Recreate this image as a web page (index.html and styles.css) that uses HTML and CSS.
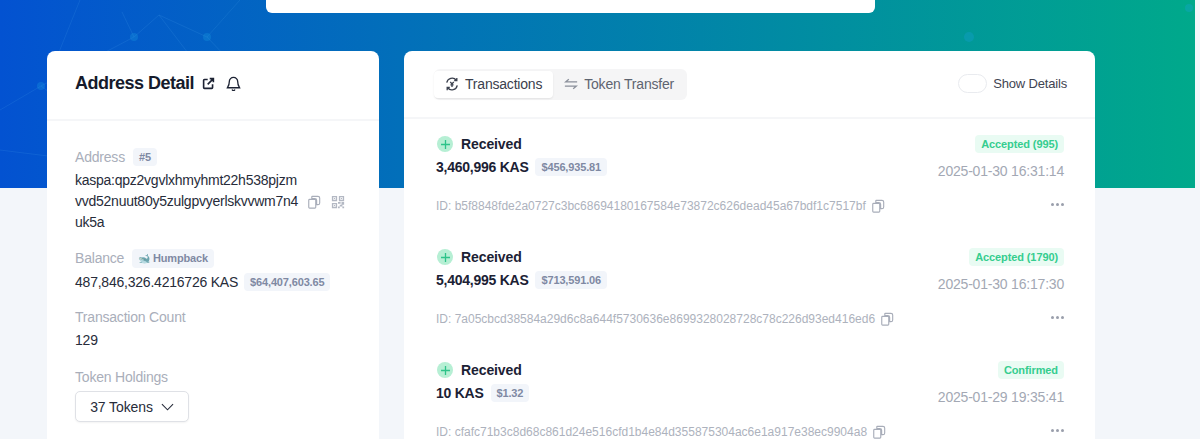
FILE: index.html
```html
<!DOCTYPE html>
<html lang="en">
<head>
<meta charset="utf-8">
<title>Address Detail</title>
<link rel="stylesheet" href="styles.css">
</head>
<body>
<div class="page">
  <div class="hero">
    <svg class="hero-net" viewBox="0 0 1195 188" preserveAspectRatio="none" aria-hidden="true">
      <g class="net-lines">
        <path d="M57 57 80 0M134 37 122 12M134 37 159 15 207 37 226 57M159 15 191 57M134 37 96 57M41 86 96 57M41 86 0 110M41 86 100 130M0 150 120 165 300 120M207 37 240 0"/>
      </g>
      <g class="net-dots">
        <circle cx="134" cy="37" r="4"/><circle cx="207" cy="37" r="4"/><circle cx="41" cy="86" r="4"/>
        <circle cx="969" cy="37" r="5"/><circle cx="1189" cy="8" r="4"/>
      </g>
    </svg>
    <div class="search-box"></div>
  </div>
  <main class="content">
    <aside class="card side">
      <header class="side-head">
        <h1>Address Detail</h1>
        <svg class="ico-share" viewBox="0 0 16 16"><path d="M7 3H3a1 1 0 0 0-1 1v9a1 1 0 0 0 1 1h9a1 1 0 0 0 1-1V9M9.500 2H14v4.500M14 2 7 9"/></svg>
        <svg class="ico-bell" viewBox="0 0 16 16"><path d="M8 1.500a4.500 4.500 0 0 0-4.500 4.500c0 4-1.500 5.500-2 6.500h13c-.5-1-2-2.500-2-6.500A4.500 4.500 0 0 0 8 1.500ZM6.500 14.500a1.600 1.600 0 0 0 3 0"/></svg>
      </header>
      <div class="side-body">
        <div class="field">
          <div class="label">Address <span class="chip chip-rank">#5</span></div>
          <div class="addr">
            <div>kaspa:qpz2vgvlxhmyhmt22h538pjzm</div>
            <div class="addr-line">vvd52nuut80y5zulgpvyerlskvvwm7n4
              <svg class="ico-copy" viewBox="0 0 16 16"><use href="#copy"/></svg>
              <svg class="ico-qr" viewBox="0 0 16 16"><path d="M1 1h6v6H1zM2.500 2.500v3h3v-3zM9 1h6v6H9zM10.500 2.500v3h3v-3zM1 9h6v6H1zM2.500 10.500v3h3v-3zM3.300 3.300h1.400v1.400H3.300zM11.300 3.300h1.400v1.400h-1.400zM3.300 11.300h1.400v1.400H3.300zM8 8h3v2H8zM12 8h3v3h-3zM10 11h3v2h-3zM8 13h2v2H8zM13 13h2v2h-2z" fill-rule="evenodd"/></svg>
            </div>
            <div>uk5a</div>
          </div>
        </div>
        <div class="field field-balance">
          <div class="label">Balance <span class="chip chip-whale"><span class="whale">🐋</span> Humpback</span></div>
          <div class="value">487,846,326.4216726 KAS <span class="chip chip-usd">$64,407,603.65</span></div>
        </div>
        <div class="field field-count">
          <div class="label">Transaction Count</div>
          <div class="value">129</div>
        </div>
        <div class="field field-tokens">
          <div class="label">Token Holdings</div>
          <button class="tokens-btn" type="button">37 Tokens
            <svg viewBox="0 0 14 8"><path d="M1 1l6 6 6-6"/></svg>
          </button>
        </div>
      </div>
    </aside>
    <section class="card list">
      <header class="list-head">
        <div class="tabs">
          <div class="tab tab-on">
            <svg class="tab-ico" viewBox="0 0 16 16"><path d="M2 6.500A6.300 6.300 0 0 1 13 3.500M14 9.500A6.300 6.300 0 0 1 3 12.500M13.500 1v3h-3M2.500 15v-3h3M6 5.500 8 8l2-2.500M8 8v3.500M6.200 9h3.600"/></svg>
            Transactions
          </div>
          <div class="tab">
            <svg class="tab-ico tab-ico-muted" viewBox="0 0 16 16"><path d="M15 5.500H2L5.500 2.500M1 10.500h13L10.500 13.500"/></svg>
            Token Transfer
          </div>
        </div>
        <div class="details"><span class="switch"></span>Show Details</div>
      </header>
      <article class="tx">
        <div class="tx-top">
          <div>
            <div class="tx-type"><span class="plus"><svg viewBox="0 0 16 16"><path d="M8 2.500v11M2.500 8h11"/></svg></span>Received</div>
            <div class="tx-amt">3,460,996 KAS <span class="chip chip-usd">$456,935.81</span></div>
          </div>
          <div class="tx-side">
            <span class="status">Accepted (995)</span>
            <div class="time">2025-01-30 16:31:14</div>
          </div>
        </div>
        <div class="tx-foot">
          <div class="tx-id">ID: b5f8848fde2a0727c3bc68694180167584e73872c626dead45a67bdf1c7517bf <svg class="ico-copy" viewBox="0 0 16 16"><use href="#copy"/></svg></div>
          <span class="more"><i></i><i></i><i></i></span>
        </div>
      </article>
      <article class="tx">
        <div class="tx-top">
          <div>
            <div class="tx-type"><span class="plus"><svg viewBox="0 0 16 16"><path d="M8 2.500v11M2.500 8h11"/></svg></span>Received</div>
            <div class="tx-amt">5,404,995 KAS <span class="chip chip-usd">$713,591.06</span></div>
          </div>
          <div class="tx-side">
            <span class="status">Accepted (1790)</span>
            <div class="time">2025-01-30 16:17:30</div>
          </div>
        </div>
        <div class="tx-foot">
          <div class="tx-id">ID: 7a05cbcd38584a29d6c8a644f5730636e8699328028728c78c226d93ed416ed6 <svg class="ico-copy" viewBox="0 0 16 16"><use href="#copy"/></svg></div>
          <span class="more"><i></i><i></i><i></i></span>
        </div>
      </article>
      <article class="tx">
        <div class="tx-top">
          <div>
            <div class="tx-type"><span class="plus"><svg viewBox="0 0 16 16"><path d="M8 2.500v11M2.500 8h11"/></svg></span>Received</div>
            <div class="tx-amt">10 KAS <span class="chip chip-usd">$1.32</span></div>
          </div>
          <div class="tx-side">
            <span class="status">Confirmed</span>
            <div class="time">2025-01-29 19:35:41</div>
          </div>
        </div>
        <div class="tx-foot">
          <div class="tx-id">ID: cfafc71b3c8d68c861d24e516cfd1b4e84d355875304ac6e1a917e38ec9904a8 <svg class="ico-copy" viewBox="0 0 16 16"><use href="#copy"/></svg></div>
          <span class="more"><i></i><i></i><i></i></span>
        </div>
      </article>
    </section>
  </main>
</div>
<svg class="defs" aria-hidden="true"><defs><g id="copy"><path d="M6 1.500h6.500a2 2 0 0 1 2 2V9a2 2 0 0 1-2 2H11V6a2 2 0 0 0-2-2H5.500V2a.5.5 0 0 1 .5-.5ZM3 5h6a1 1 0 0 1 1 1v8a1 1 0 0 1-1 1H3a1 1 0 0 1-1-1V6a1 1 0 0 1 1-1Z"/></g></defs></svg>
</body>
</html>
```
FILE: styles.css
```css
* { box-sizing: border-box; }
html, body { margin: 0; padding: 0; height: 439px; overflow: hidden; }
body { background: #f3f6fa; font-family: "Liberation Sans", Arial, sans-serif; color: #1c2233; }
.defs { width: 0; height: 0; display: block; }
.page { width: 1195px; }
.hero { height: 188px; position: relative; background: linear-gradient(90deg, #0352d1 0%, #00a98b 100%); display: flex; justify-content: center; }
.hero-net { position: absolute; inset: 0; width: 100%; height: 100%; }
.net-lines path { fill: none; stroke: rgba(90,180,240,.14); stroke-width: 1; }
.net-dots circle { fill: rgba(30,160,225,.28); }
.search-box { position: relative; width: 609px; height: 13px; margin-left: -54px; background: #fff; border-radius: 0 0 6px 6px; }
.content { display: flex; align-items: flex-start; gap: 25px; margin: -137px 0 0 47px; position: relative; }
.card { background: #fff; border-radius: 8px; }
.side { width: 332px; height: 600px; flex: none; }
.list { width: 691px; height: 600px; flex: none; }
.side-head { height: 70px; padding: 0 28px 4px; display: flex; align-items: center; border-bottom: 2px solid #f5f6f8; }
.side-head h1 { margin: 0; font-size: 18px; letter-spacing: -.5px; font-weight: 700; color: #161b2c; }
.ico-share { width: 13px; height: 13px; margin-left: 8px; fill: none; stroke: #1c2233; stroke-width: 2; }
.ico-bell { width: 15px; height: 15px; margin-left: 11px; fill: none; stroke: #1c2233; stroke-width: 1.4; }
.side-body { padding: 26px 28px 0; }
.label { font-size: 14px; letter-spacing: -.2px; line-height: 20px; color: #a9aeba; display: flex; align-items: center; gap: 8px; }
.chip { display: inline-block; background: #f2f5fa; color: #7f89a3; font-size: 11px; letter-spacing: -.15px; font-weight: 700; border-radius: 4px; line-height: 18px; padding: 0 6px; white-space: nowrap; }
.addr { margin-top: 3px; font-size: 14px; letter-spacing: -.25px; line-height: 21px; color: #272c3a; }
.addr-line { display: flex; align-items: center; }
.ico-copy { width: 14px; height: 14px; fill: none; stroke: #a8adb9; stroke-width: 1.300; vertical-align: -3px; flex: none; }
.addr-line .ico-copy { margin-left: 9px; }
.ico-qr { width: 14px; height: 14px; fill: #b3b8c3; margin-left: 10px; flex: none; }
.field-balance { margin-top: 15px; }
.whale { font-size: 10px; }
.value { font-size: 14px; letter-spacing: -.22px; line-height: 20px; color: #272c3a; margin-top: 4px; display: flex; align-items: center; gap: 6px; }
.field-count { margin-top: 15px; }
.field-count .value { margin-top: 3px; }
.field-tokens { margin-top: 17px; }
.tokens-btn { margin-top: 4px; width: 114px; height: 31px; background: #fff; border: 1px solid #dfe1e6; border-radius: 5px; box-shadow: 0 1px 2px rgba(0,0,0,.05); font: 14px "Liberation Sans", Arial, sans-serif; letter-spacing: -.1px; color: #272c3a; display: flex; align-items: center; justify-content: center; gap: 8px; padding: 0; }
.tokens-btn svg { width: 13px; height: 8px; fill: none; stroke: #272c3a; stroke-width: 1.2; }
.list-head { height: 68px; padding: 18px 28px 0 30px; display: flex; justify-content: space-between; align-items: flex-start; border-bottom: 2px solid #f5f6f8; }
.tabs { display: flex; background: #f5f5f6; border-radius: 6px; padding: 2px 2px 2px 0; height: 31px; }
.tab { display: flex; align-items: center; gap: 6px; padding: 0 11px 2px; font-size: 14px; letter-spacing: -.2px; color: #5e6470; height: 27px; }
.tab-on { background: #fff; border-radius: 4px; box-shadow: 0 1px 2px rgba(0,0,0,.08); color: #3b404d; }
.tab-ico { width: 14px; height: 14px; fill: none; stroke: currentColor; stroke-width: 1.5; }
.tab-ico-muted { color: #8a8f9a; }
.details { display: flex; align-items: center; font-size: 13px; letter-spacing: -.17px; color: #3f4452; height: 28px; }
.switch { width: 29px; height: 19px; border: 1px solid #e9ebef; border-radius: 10px; margin-right: 6px; background: #fff; }
.tx { padding: 15px 31px 0 32px; height: 113px; }
.tx-top { display: flex; justify-content: space-between; }
.tx-type { display: flex; align-items: center; font-size: 14px; letter-spacing: -.1px; font-weight: 700; color: #1b2134; line-height: 20px; padding-left: 1px; }
.plus { width: 16px; height: 16px; border-radius: 50%; background: #b6efd4; margin-right: 8px; display: flex; align-items: center; justify-content: center; }
.plus svg { width: 13px; height: 13px; fill: none; stroke: #2cc389; stroke-width: 1.600; }
.tx-amt { display: flex; align-items: center; gap: 7px; font-size: 14px; letter-spacing: -.25px; font-weight: 700; color: #1b2134; line-height: 20px; margin-top: 3px; }
.tx-side { text-align: right; }
.status { display: inline-block; background: #e9fbf3; color: #35cd8f; font-size: 11px; letter-spacing: -.1px; font-weight: 700; line-height: 18px; border-radius: 4px; padding: 0 6px; white-space: nowrap; }
.time { font-size: 14px; letter-spacing: -.2px; color: #a3a8b4; line-height: 20px; margin-top: 8px; }
.tx-foot { display: flex; justify-content: space-between; align-items: center; margin-top: 16px; }
.tx-id { font-size: 12px; color: #adb2bd; line-height: 18px; }
.tx-id .ico-copy { margin-left: 2px; }
.more { display: flex; gap: 2px; padding-bottom: 4px; }
.more i { width: 3px; height: 3px; border-radius: 50%; background: #9a9fac; }
```
